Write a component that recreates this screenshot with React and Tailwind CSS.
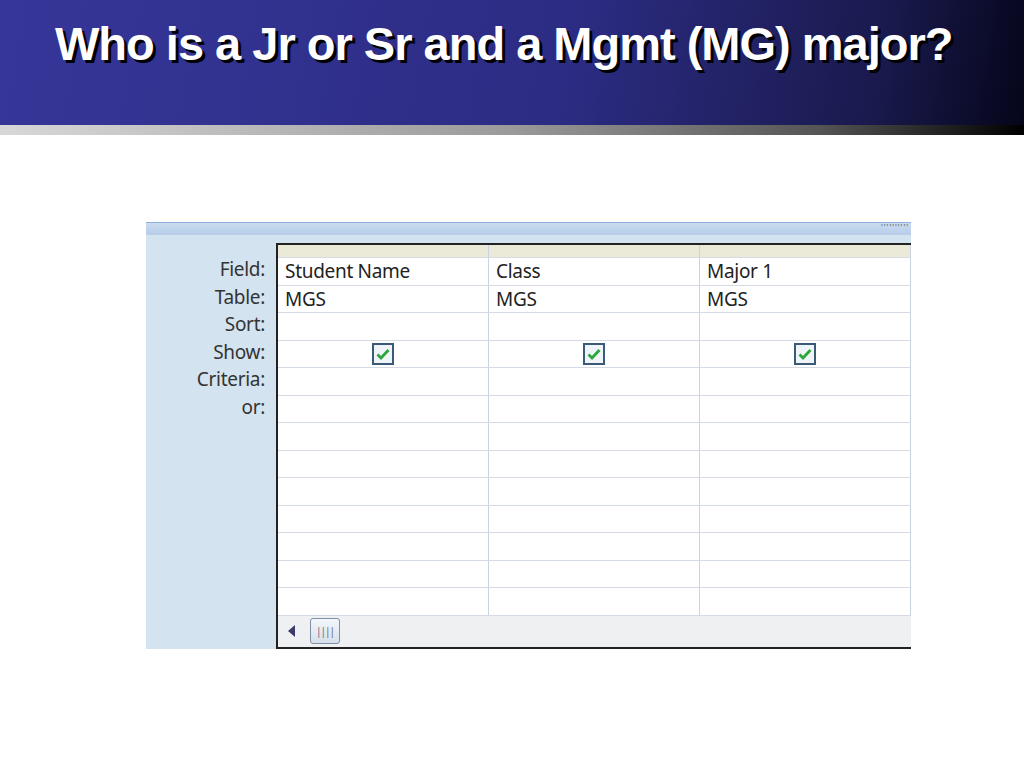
export default function App() {
  const labels = ["Field:", "Table:", "Sort:", "Show:", "Criteria:", "or:"];
  const cols = [
    ["Student Name", "MGS"],
    ["Class", "MGS"],
    ["Major 1", "MGS"],
  ];
  const rows = Array.from({ length: 13 });
  const Check = () => (
    <div className="w-[22px] h-[22px] border-2 border-[#3b5a78] bg-[#eef4f8] flex items-center justify-center">
      <svg width="14" height="12" viewBox="0 0 14 12"><path d="M1.5 6.5 L5 10 L12.5 2" stroke="#2aa63a" strokeWidth="2.8" fill="none" /></svg>
    </div>
  );
  return (
    <div className="w-[1024px] h-[768px] bg-white relative overflow-hidden" style={{ fontFamily: "'Noto Sans', sans-serif" }}>
      <div className="h-[125px] bg-[linear-gradient(100deg,#363699_0%,#2c2c84_55%,#1a1a4e_85%,#05051a_100%)] pt-[16px] pl-[55px]">
        <div className="text-white font-bold text-[47px] leading-[56px] tracking-[-1px] [text-shadow:3px_3px_0_#000]" style={{ fontFamily: "'Liberation Sans', Arial, sans-serif" }}>
          Who is a Jr or Sr and a Mgmt (MG) major?
        </div>
      </div>
      <div className="h-[10px] bg-[linear-gradient(90deg,#d8d8d8_0%,#9a9a9a_50%,#555_80%,#000_100%)]" />
      <div className="absolute left-[146px] top-[222px] w-[765px] h-[427px] bg-[#d3e3f0] flex flex-col">
        <div className="h-[13px] bg-[linear-gradient(#c9dbf0,#b7cde8)] border-t border-[#8fb0d8] relative">
          <div className="absolute right-[2px] top-[1px] text-[8px] leading-[8px] text-[#555] tracking-[1px]">''''''''''</div>
        </div>
        <div className="flex flex-1">
          <div className="w-[131px] pt-[21px] flex flex-col items-end pr-[11px]">
            {labels.map((l) => (
              <div key={l} className="h-[27.5px] text-[19px] leading-[27px] text-[#333] tracking-[-0.3px]">{l}</div>
            ))}
          </div>
          <div className="flex-1 mt-[8px] border-l-2 border-t-2 border-b-2 border-[#222] bg-white flex flex-col">
            <div className="flex h-[12px] bg-[#ebead8]">
              {cols.map((c, i) => <div key={i} className="w-[211px] border-r border-[#c8d4e0]" />)}
            </div>
            {rows.map((_, r) => (
              <div key={r} className="flex h-[27.5px] border-t border-[#d4dbe4]">
                {cols.map((c, i) => (
                  <div key={i} className="w-[211px] border-r border-[#c8d4e0] px-[7px] text-[19px] leading-[26px] text-[#222] tracking-[-0.3px] flex items-center">
                    {r < 2 ? c[r] : r === 3 ? <div className="w-full flex justify-center"><Check /></div> : null}
                  </div>
                ))}
              </div>
            ))}
            <div className="flex-1 bg-[#eef0f2] border-t border-[#d4dbe4] flex items-center pl-[10px] gap-[14px]">
              <svg width="8" height="12" viewBox="0 0 8 12"><path d="M7 0 L0 6 L7 12 Z" fill="#3c3c6a" /></svg>
              <div className="w-[30px] h-[26px] rounded-[3px] border border-[#7f8fa8] bg-[linear-gradient(#f4f7fb,#d6dfea)] flex items-center justify-center text-[10px] text-[#667] tracking-[-1px]">||||</div>
            </div>
          </div>
        </div>
      </div>
    </div>
  );
}
